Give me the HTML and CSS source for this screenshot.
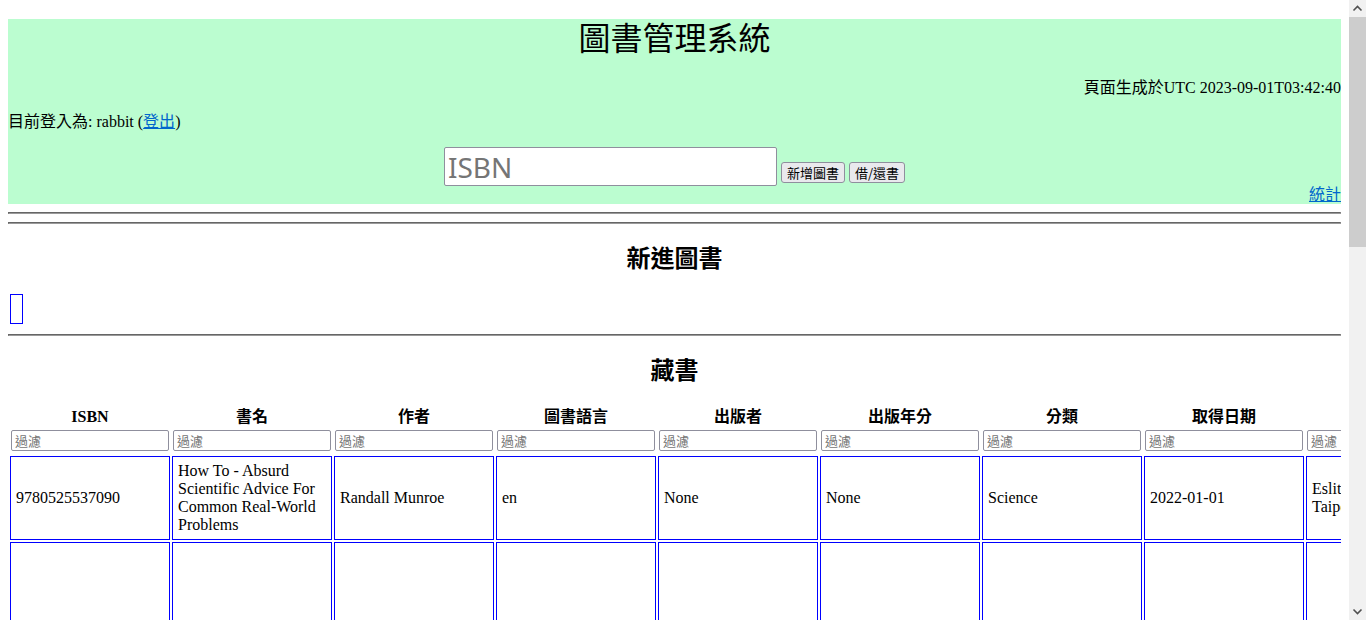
FILE: index.html
```html
<!DOCTYPE html>
<html lang="zh-Hant">
<head>
<meta charset="utf-8">
<title>圖書管理系統</title>
<link rel="stylesheet" href="styles.css">
</head>
<body>
<div class="header">
  <h1 class="title">圖書管理系統</h1>
  <div class="gen">頁面生成於UTC 2023-09-01T03:42:40</div>
  <div class="user">目前登入為: rabbit (<a href="#" class="link">登出</a>)</div>
  <div class="search">
    <input class="isbn" type="text" placeholder="ISBN">
    <button class="btn">新增圖書</button>
    <button class="btn">借/還書</button>
  </div>
  <div class="stats"><a href="#" class="link">統計</a></div>
</div>
<hr class="rule">
<hr class="rule">
<h2 class="section">新進圖書</h2>
<div class="recent"><span class="slot"></span></div>
<hr class="rule">
<h2 class="section">藏書</h2>
<div class="tablewrap">
<table class="books">
  <thead>
    <tr>
      <th class="col">ISBN<input class="filter" placeholder="過濾"></th>
      <th class="col">書名<input class="filter" placeholder="過濾"></th>
      <th class="col">作者<input class="filter" placeholder="過濾"></th>
      <th class="col">圖書語言<input class="filter" placeholder="過濾"></th>
      <th class="col">出版者<input class="filter" placeholder="過濾"></th>
      <th class="col">出版年分<input class="filter" placeholder="過濾"></th>
      <th class="col">分類<input class="filter" placeholder="過濾"></th>
      <th class="col">取得日期<input class="filter" placeholder="過濾"></th>
      <th class="col">取得地點<input class="filter" placeholder="過濾"></th>
      <th class="col">狀態<input class="filter" placeholder="過濾"></th>
    </tr>
  </thead>
  <tbody>
    <tr class="row">
      <td class="cell">9780525537090</td>
      <td class="cell">How To - Absurd Scientific Advice For Common Real-World Problems</td>
      <td class="cell">Randall Munroe</td>
      <td class="cell">en</td>
      <td class="cell">None</td>
      <td class="cell">None</td>
      <td class="cell">Science</td>
      <td class="cell">2022-01-01</td>
      <td class="cell">Eslite Bookstore, Taipei</td>
      <td class="cell">在架上</td>
    </tr>
    <tr class="row tall">
      <td class="cell"></td>
      <td class="cell"></td>
      <td class="cell"></td>
      <td class="cell"></td>
      <td class="cell"></td>
      <td class="cell"></td>
      <td class="cell"></td>
      <td class="cell"></td>
      <td class="cell"></td>
      <td class="cell"></td>
    </tr>
  </tbody>
</table>
</div>
<div class="scrollbar" aria-hidden="true">
  <div class="sb-arrow">
    <svg width="17" height="17" viewBox="0 0 17 17"><path d="M4.5 10.5 L8.5 6.5 L12.5 10.5" fill="none" stroke="#505050" stroke-width="1.6"/></svg>
  </div>
  <div class="sb-thumb"></div>
  <div class="sb-track"></div>
  <div class="sb-arrow">
    <svg width="17" height="17" viewBox="0 0 17 17"><path d="M4.5 6.5 L8.5 10.5 L12.5 6.5" fill="none" stroke="#505050" stroke-width="1.6"/></svg>
  </div>
</div>
</body>
</html>
```
FILE: styles.css
```css
html, body {
  background: #ffffff;
}
body {
  margin: 8px 25px 8px 8px;
  padding-top: 11px;
  font-family: "Liberation Serif", "Noto Sans CJK TC", serif;
  font-size: 16px;
  color: #000;
}
.header {
  background: #bbfdd0;
}
.title {
  margin: 0;
  font-size: 32px;
  font-weight: normal;
  line-height: 40px;
  text-align: center;
}
.gen {
  margin-top: 19px;
  line-height: 20px;
  text-align: right;
}
.user {
  margin-top: 14px;
  line-height: 20px;
}
.link {
  color: #0066cc;
}
.search {
  margin-top: 15px;
  display: flex;
  justify-content: center;
  align-items: flex-end;
  gap: 4px;
}
.isbn {
  box-sizing: border-box;
  width: 333px;
  height: 39px;
  margin: 0;
  padding: 0 3px;
  border: 1px solid #8f8f9d;
  border-radius: 2px;
  font-family: "Noto Sans", sans-serif;
  font-size: 28px;
  background: #fff;
}
.isbn::placeholder {
  color: #757575;
}
.btn {
  box-sizing: border-box;
  height: 21px;
  margin: 0 0 3px 0;
  padding: 0 5px;
  border: 1px solid #8f8f9d;
  border-radius: 3px;
  background: #e9e9ed;
  font-family: "Noto Sans CJK TC", sans-serif;
  font-size: 13px;
  line-height: 17px;
  color: #000;
}
.stats {
  line-height: 18px;
  text-align: right;
}
.rule {
  margin: 8px 0;
  height: 0;
  border-style: solid;
  border-width: 1px;
  border-color: #666666 #9a9a9a #9a9a9a #666666;
}
.section {
  margin: 20px 0;
  font-size: 24px;
  font-weight: bold;
  line-height: 30px;
  text-align: center;
}
.recent {
  height: 32px;
}
.slot {
  display: block;
  margin-left: 2px;
  width: 11px;
  height: 28px;
  border: 1px solid #0000ff;
}
.tablewrap {
  overflow: hidden;
}
.books {
  border-collapse: separate;
  border-spacing: 2px;
  table-layout: fixed;
  width: 1622px;
}
.col {
  width: 158px;
  padding: 1px;
  font-weight: bold;
  line-height: 15px;
  text-align: center;
  vertical-align: top;
}
.filter {
  display: block;
  box-sizing: border-box;
  width: 100%;
  height: 21px;
  margin: 6px 0 2px 0;
  padding: 0 3px;
  border: 1px solid #8f8f9d;
  border-radius: 2px;
  font-family: "Noto Sans CJK TC", sans-serif;
  font-size: 13px;
  font-weight: normal;
  line-height: 19px;
  background: #fff;
}
.filter::placeholder {
  color: #757575;
}
.cell {
  border: 1px solid #0000ff;
  padding: 5px;
  line-height: 18px;
  vertical-align: middle;
  text-align: left;
}
.tall .cell {
  height: 150px;
}
.scrollbar {
  position: fixed;
  top: 0;
  right: 0;
  width: 17px;
  height: 100vh;
  display: flex;
  flex-direction: column;
  background: #f1f1f1;
}
.sb-arrow {
  height: 17px;
  flex: none;
}
.sb-arrow svg {
  display: block;
}
.sb-thumb {
  height: 230px;
  flex: none;
  background: #cdcdcd;
}
.sb-track {
  flex: 1;
}
```
